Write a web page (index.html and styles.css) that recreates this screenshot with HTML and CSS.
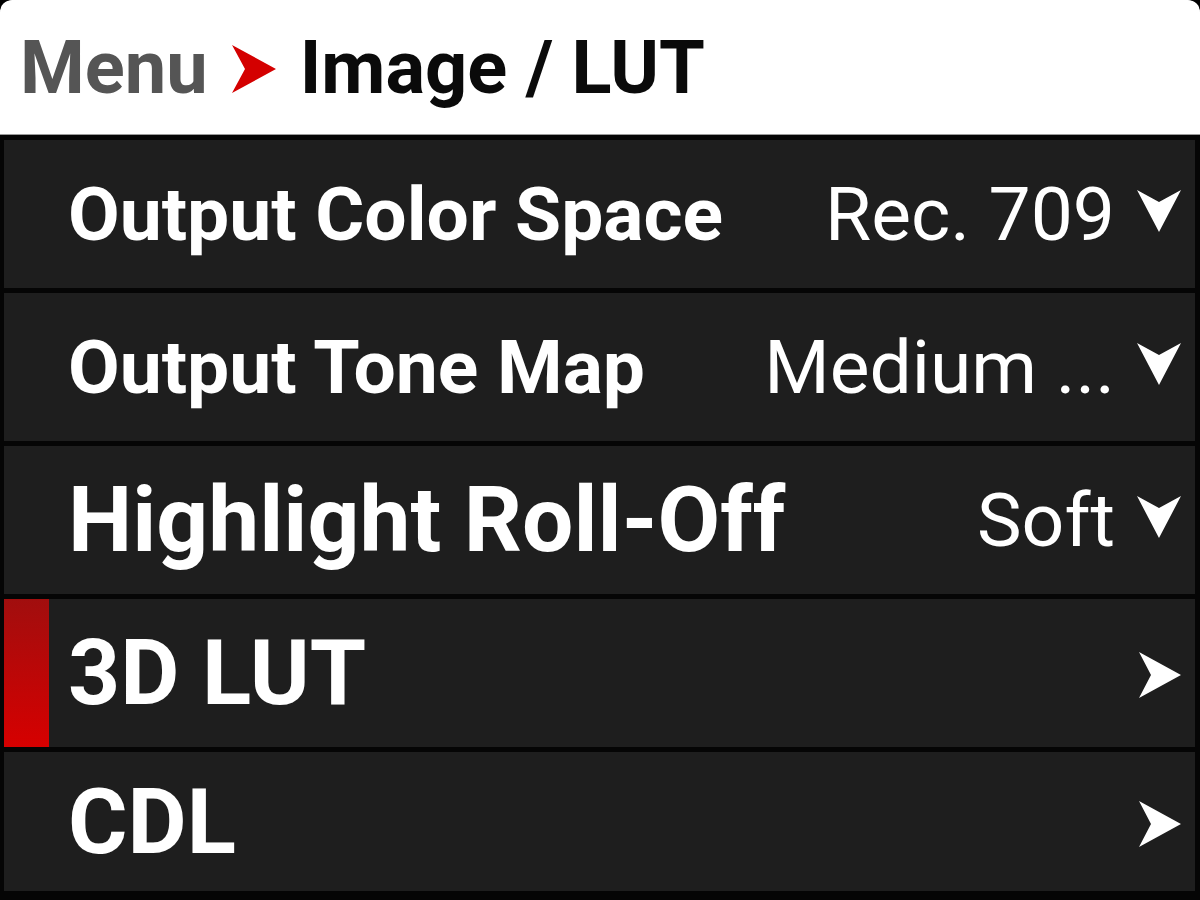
FILE: index.html
```html
<!DOCTYPE html>
<html lang="en">
<head>
  <meta charset="UTF-8" />
  <title>Image / LUT</title>
  <link rel="stylesheet" href="styles.css">
</head>
<body>
  <div class="screen">
    <!-- Breadcrumb -->
    <header class="crumbs">
      <span class="crumb-root">Menu</span>
      <svg class="crumb-arrow" viewBox="0 0 48 52" width="48" height="52">
        <path d="M2 2 L46 26 L2 50 L15 26 Z" fill="#d40000"/>
      </svg>
      <span class="crumb-current">Image / LUT</span>
    </header>

    <!-- Menu items -->
    <ul class="menu">
      <li class="item item-small">
        <span class="label">Output Color Space</span>
        <span class="value">Rec. 709</span>
        <svg class="chev-down" viewBox="0 0 48 46" width="48" height="46">
          <path d="M2 2 L24 14 L46 2 L24 44 Z" fill="#fff"/>
        </svg>
      </li>
      <li class="item item-small">
        <span class="label">Output Tone Map</span>
        <span class="value">Medium ...</span>
        <svg class="chev-down" viewBox="0 0 48 46" width="48" height="46">
          <path d="M2 2 L24 14 L46 2 L24 44 Z" fill="#fff"/>
        </svg>
      </li>
      <li class="item">
        <span class="label">Highlight Roll-Off</span>
        <span class="value">Soft</span>
        <svg class="chev-down" viewBox="0 0 48 46" width="48" height="46">
          <path d="M2 2 L24 14 L46 2 L24 44 Z" fill="#fff"/>
        </svg>
      </li>
      <li class="item selected">
        <span class="label">3D LUT</span>
        <svg class="chev-right" viewBox="0 0 46 50" width="46" height="50">
          <path d="M2 2 L44 25 L2 48 L14 25 Z" fill="#fff"/>
        </svg>
      </li>
      <li class="item">
        <span class="label">CDL</span>
        <svg class="chev-right" viewBox="0 0 46 50" width="46" height="50">
          <path d="M2 2 L44 25 L2 48 L14 25 Z" fill="#fff"/>
        </svg>
      </li>
    </ul>
  </div>
</body>
</html>
```

FILE: styles.css
```css
html, body {
  margin: 0;
  height: 100%;
  background: #000;
}

body {
  font-family: Roboto, "Liberation Sans", sans-serif;
  overflow: hidden;
}

.screen {
  width: 1200px;
  height: 900px;
  display: flex;
  flex-direction: column;
  background: #050505;
  border-radius: 10px 10px 0 0;
  overflow: hidden;
}

/* Breadcrumb header */
.crumbs {
  height: 134px;
  flex: none;
  background: #fff;
  border-bottom: 1px solid #9a9a9a;
  display: flex;
  align-items: center;
  padding: 0 0 0 20px;
  font-weight: 700;
  font-size: 74px;
  border-radius: 12px 12px 0 0;
}

.crumb-root {
  color: #555;
}

.crumb-arrow {
  margin: 4px 22px 0 22px;
}

.crumb-current {
  color: #0a0a0a;
}

/* List */
.menu {
  list-style: none;
  margin: 0;
  padding: 5px 5px 0 4px;
  display: flex;
  flex-direction: column;
  gap: 5px;
  flex: 1;
}

.item {
  position: relative;
  height: 148px;
  background: #1e1e1e;
  display: flex;
  align-items: center;
  padding: 0 12px 0 64px;
  color: #fff;
}

.item:last-child {
  height: 139px;
}

.label {
  flex: 1;
  font-weight: 700;
  font-size: 91px;
  white-space: nowrap;
}

.item-small .label {
  font-size: 75px;
}

.value {
  font-size: 75px;
  font-weight: 400;
  margin-right: 20px;
  white-space: nowrap;
}

.chev-down {
  margin-top: -6px;
}

.chev-right {
  margin-top: 4px;
}

.selected::before {
  content: "";
  position: absolute;
  left: 0;
  top: 0;
  bottom: 0;
  width: 45px;
  background: linear-gradient(#a10e0e, #d60000);
}
```
